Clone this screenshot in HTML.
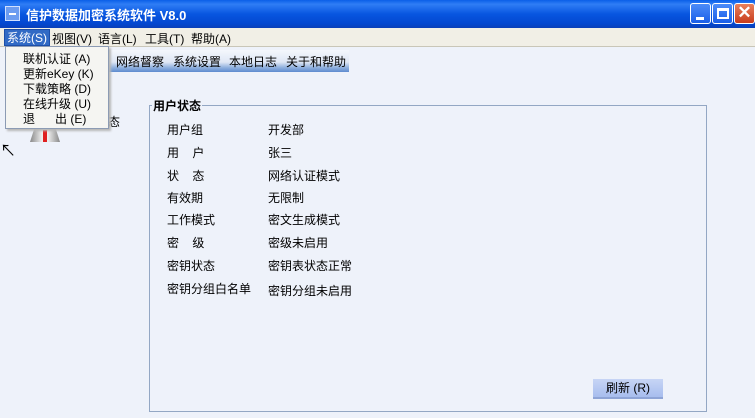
<!DOCTYPE html>
<html><head><meta charset="utf-8"><style>
*{margin:0;padding:0;box-sizing:border-box}
body{width:755px;height:418px;overflow:hidden;background:#eef2fa;font-family:"Liberation Sans","Noto Sans CJK SC","WenQuanYi Zen Hei",sans-serif;font-size:12px;color:#000;position:relative}
.abs{position:absolute}
#title{left:0;top:0;width:755px;height:28px;background:linear-gradient(#0a5fe8 0%,#2f7df5 15%,#0856e0 50%,#0347d0 85%,#0a3fb8 100%)}
#title .t{left:26px;top:5px;color:#fff;font-weight:bold;font-size:13px}
.btn{top:3px;width:21px;height:21px;border:1px solid #fff;border-radius:3px;background:linear-gradient(#4c8cf8,#1a5ee8)}
#menu{left:0;top:28px;width:755px;height:19px;background:#f1efe6;border-bottom:1px solid #c9c6b8}
#menu span{position:absolute;top:2px}
#drop{left:5px;top:46px;width:104px;height:83px;background:#f5f5f2;border:1px solid #8c9bb4;box-shadow:2px 2px 2px #b8b8b8}
#drop div{position:absolute;left:17px}
#tabs{left:108px;top:50px;width:241px;height:22px;background:linear-gradient(#f4f7fc 0%,#dfe7f5 55%,#8fb0de 80%,#5d8bcf 100%)}
#tabs span{position:absolute;top:3px}
#grp{left:149px;top:105px;width:558px;height:307px;border:1px solid #93a7c4}
#grp .h{left:2px;top:-9px;background:#eef2fa;font-weight:bold;padding:0 1px}
.l{left:17px}.v{left:118px}
#rf{left:593px;top:379px;width:70px;height:20px;background:linear-gradient(#c7d5f5,#a7bdee);border-bottom:2px solid #8ea4d6;text-align:center;line-height:19px}
</style></head><body>
<div id="title" class="abs">
 <div class="abs" style="left:5px;top:6px;width:15px;height:15px;background:#6c9cf0;border:1px solid #d0e0ff"><div class="abs" style="left:3px;top:6px;width:7px;height:2px;background:#fff"></div></div>
 <div class="abs t">信护数据加密系统软件 V8.0</div>
 <div class="abs btn" style="left:690px"><div class="abs" style="left:5px;top:13px;width:8px;height:3px;background:#fff"></div></div>
 <div class="abs btn" style="left:712px"><div class="abs" style="left:4px;top:4px;width:12px;height:11px;border:2px solid #fff;border-top-width:3px"></div></div>
 <div class="abs btn" style="left:734px;background:linear-gradient(#e8805c,#c83c1c);color:#fff;font-weight:bold;font-size:17px;line-height:18px;text-align:center">✕</div>
</div>
<div id="menu" class="abs">
 <span style="left:4px;top:1px;background:#316ac5;color:#fff;padding:0 2px;height:17px;line-height:16px;border:1px solid #1c4ea8">系统(S)</span>
 <span style="left:52px">视图(V)</span>
 <span style="left:98px">语言(L)</span>
 <span style="left:145px">工具(T)</span>
 <span style="left:191px">帮助(A)</span>
</div>
<div id="tabs" class="abs">
 <span style="left:8px">网络督察</span><span style="left:65px">系统设置</span><span style="left:121px">本地日志</span><span style="left:178px">关于和帮助</span>
</div>
<div class="abs" style="left:108px;top:113px">态</div>
<div class="abs" style="left:30px;top:128px;width:30px;height:14px;background:linear-gradient(90deg,#888,#eee 40%,#eee 60%,#888);clip-path:polygon(15% 0,85% 0,100% 100%,0 100%)"><div class="abs" style="left:13px;top:2px;width:4px;height:12px;background:#e02020"></div></div>
<div class="abs" style="left:0;top:137px;font-size:16px">↖</div>
<div id="drop" class="abs">
 <div style="top:3px">联机认证 (A)</div>
 <div style="top:18px">更新eKey (K)</div>
 <div style="top:33px">下载策略 (D)</div>
 <div style="top:48px">在线升级 (U)</div>
 <div style="top:63px">退&nbsp;&nbsp;&nbsp;&nbsp;&nbsp;&nbsp;出 (E)</div>
</div>
<div id="grp" class="abs">
 <div class="abs h">用户状态</div>
 <div class="abs l" style="top:15px">用户组</div><div class="abs v" style="top:15px">开发部</div>
 <div class="abs l" style="top:38px">用&nbsp;&nbsp;&nbsp;&nbsp;户</div><div class="abs v" style="top:38px">张三</div>
 <div class="abs l" style="top:61px">状&nbsp;&nbsp;&nbsp;&nbsp;态</div><div class="abs v" style="top:61px">网络认证模式</div>
 <div class="abs l" style="top:83px">有效期</div><div class="abs v" style="top:83px">无限制</div>
 <div class="abs l" style="top:105px">工作模式</div><div class="abs v" style="top:105px">密文生成模式</div>
 <div class="abs l" style="top:128px">密&nbsp;&nbsp;&nbsp;&nbsp;级</div><div class="abs v" style="top:128px">密级未启用</div>
 <div class="abs l" style="top:151px">密钥状态</div><div class="abs v" style="top:151px">密钥表状态正常</div>
 <div class="abs l" style="top:174px">密钥分组白名单</div><div class="abs v" style="top:176px">密钥分组未启用</div>
</div>
<div id="rf" class="abs">刷新 (R)</div>
</body></html>
